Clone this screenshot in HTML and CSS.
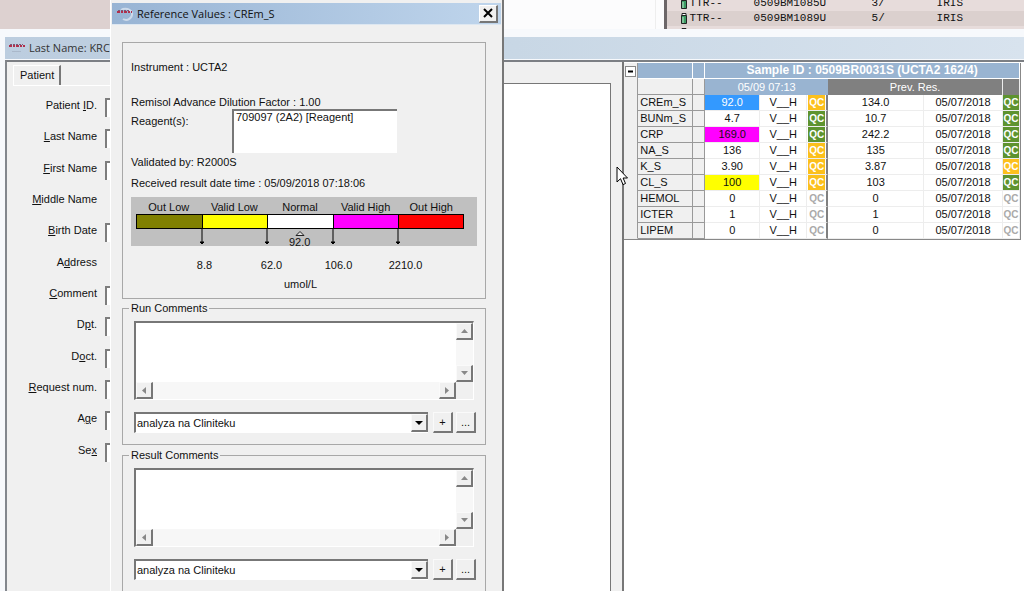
FILE: index.html
```html
<!DOCTYPE html>
<html lang="en">
<head>
<meta charset="utf-8">
<title>Reference Values : CREm_S</title>
<link rel="stylesheet" href="styles.css">
<script src="app.js" defer></script>
</head>
<body>
<div class="desktop">
  <div class="backdrop">
    <div class="backdrop-side"></div>
    <div class="backdrop-page"></div>
    <div class="worklist">
      <table class="worklist-table">
        <colgroup><col class="w-icon"><col class="w-test"><col class="w-sample"><col class="w-pos"><col></colgroup>
        <tbody>
          <tr><td><svg class="tube" viewBox="0 0 6 11"><path d="M.5 2.5h5v8h-5z" fill="#3c9a62" stroke="#222"/><path d="M1 .5h4v2H1z" fill="#fff" stroke="#222"/><path d="M2 4v6" stroke="#bfe8cd"/></svg></td><td>TTR--</td><td>0509BM1085U</td><td>3/</td><td>IRIS</td></tr>
          <tr><td><svg class="tube" viewBox="0 0 6 11"><path d="M.5 2.5h5v8h-5z" fill="#3c9a62" stroke="#222"/><path d="M1 .5h4v2H1z" fill="#fff" stroke="#222"/><path d="M2 4v6" stroke="#bfe8cd"/></svg></td><td>TTR--</td><td>0509BM1089U</td><td>5/</td><td>IRIS</td></tr>
          <tr><td><svg class="tube" viewBox="0 0 6 11"><path d="M.5 2.5h5v8h-5z" fill="#3c9a62" stroke="#222"/><path d="M1 .5h4v2H1z" fill="#fff" stroke="#222"/></svg></td><td></td><td></td><td></td><td></td></tr>
        </tbody>
      </table>
    </div>
  </div>

  <main class="window">
    <header class="titlebar">
      <svg class="logo" viewBox="0 0 18 14"><path d="M1 5h3M5 5h2M8 5h3M12 5h2M15 5h2" stroke="#b0304c" stroke-width="2"/><path d="M2 3.500h13" stroke="#7b5a78" stroke-dasharray="2 1"/><path d="M4 10.500h9" stroke="#aab8ca"/></svg>
      <span>Last Name: KRC</span>
    </header>
    <div class="client">
      <section class="patient-pane">
        <div class="patient">
          <div class="tabs"><button class="tab" type="button">Patient</button></div>
          <form class="fields">
            <label for="pid">Patient <u>I</u>D.</label><input id="pid">
            <label for="last"><u>L</u>ast Name</label><input id="last">
            <label for="first"><u>F</u>irst Name</label><input id="first">
            <label for="middle"><u>M</u>iddle Name</label><input id="middle" class="inset">
            <label for="birth"><u>B</u>irth Date</label><input id="birth">
            <label for="address">A<u>d</u>dress</label><input id="address" class="inset">
            <label for="comment"><u>C</u>omment</label><input id="comment">
            <label for="dpt">D<u>p</u>t.</label><input id="dpt">
            <label for="doct">D<u>o</u>ct.</label><input id="doct">
            <label for="request"><u>R</u>equest num.</label><input id="request">
            <label for="age">A<u>g</u>e</label><input id="age">
            <label for="sex">Se<u>x</u></label><input id="sex">
          </form>
        </div>
        <div class="sheet"></div>
      </section>
      <section class="results">
        <table class="results-table">
          <colgroup><col class="c-gutter"><col class="c-name"><col class="c-flag"><col class="c-value"><col class="c-range"><col class="c-qc"><col class="c-prev"><col class="c-date"><col class="c-qc2"></colgroup>
          <tbody id="results">
            <tr class="sample-row">
              <td class="gutter" rowspan="11"><button class="toggle" type="button" aria-label="Collapse"><svg viewBox="0 0 9 9"><path d="M2 4.500h5" stroke="#000" stroke-width="2"/></svg></button></td>
              <td></td><td></td><th colspan="6">Sample ID : 0509BR0031S (UCTA2 162/4)</th>
            </tr>
            <tr class="date-row">
              <td class="name"></td><td class="name"></td><th class="current" colspan="3">05/09 07:13</th><th class="previous" colspan="2">Prev. Res.</th><th class="previous"></th>
            </tr>
          </tbody>
        </table>
      </section>
    </div>
  </main>

  <svg class="cursor" viewBox="0 0 12 20"><path d="M1 1v15l3.500-3.300L7 18.600l2.500-1.100-2.400-5.500H11.500z" fill="#fff" stroke="#000"/></svg>

  <div class="dialog" role="dialog" aria-labelledby="dialog-title">
    <header class="dialog-title">
      <svg class="logo" viewBox="0 0 18 14"><path d="M5 3a7 6 0 0 1 11 3 6 6 0 0 1-9 6" fill="none" stroke="#cddaea" stroke-width="2"/><path d="M1 5h3M5 5h2M8 5h3M12 5h2M15 5h1" stroke="#b0304c" stroke-width="2"/><path d="M2 3.500h12" stroke="#7b5a78" stroke-dasharray="2 1"/></svg>
      <h1 id="dialog-title">Reference Values : CREm_S</h1>
      <button class="close" type="button" aria-label="Close"><svg viewBox="0 0 10 10"><path d="M1 1l8 8M9 1L1 9" stroke="#000" stroke-width="2"/></svg></button>
    </header>
    <div class="dialog-body">
      <section class="info">
        <p class="instrument">Instrument : UCTA2</p>
        <p>Remisol Advance Dilution Factor : 1.00</p>
        <div class="reagents">
          <label for="reagents">Reagent(s):</label>
          <select id="reagents" size="3"><option>709097 (2A2) [Reagent]</option></select>
        </div>
        <p class="validated">Validated by: R2000S</p>
        <p>Received result date time : 05/09/2018 07:18:06</p>
        <div class="scale">
          <div class="scale-labels"><span>Out Low</span><span>Valid Low</span><span>Normal</span><span>Valid High</span><span>Out High</span></div>
          <div class="scale-bar"><i class="out-low"></i><i class="valid-low"></i><i class="normal"></i><i class="valid-high"></i><i class="out-high"></i></div>
          <svg class="scale-marks" viewBox="0 0 327 17"><g stroke="#000" fill="#000"><path d="M65.500 0v14M130.500 0v14M196.500 0v14M261.500 0v14"/><path d="M63.500 13h4l-2 2zM128.500 13h4l-2 2zM194.500 13h4l-2 2zM259.500 13h4l-2 2z"/></g><path d="M159.500 6.500h8l-4-4z" fill="#ddd" stroke="#222"/></svg>
          <span class="scale-value">92.0</span>
        </div>
        <div class="limits"><span>8.8</span><span>62.0</span><span>106.0</span><span>2210.0</span></div>
        <p class="unit">umol/L</p>
      </section>

      <fieldset class="comments">
        <legend>Run Comments</legend>
        <div class="memo">
          <textarea aria-label="Run Comments"></textarea>
          <div class="vbar"><button type="button" aria-label="Scroll up"><svg viewBox="0 0 8 8"><path d="M1 6h7L4.500 2z" fill="#888"/></svg></button><button type="button" aria-label="Scroll down"><svg viewBox="0 0 8 8"><path d="M1 2h7L4.500 6z" fill="#888"/></svg></button></div>
          <div class="hbar"><button type="button" aria-label="Scroll left"><svg viewBox="0 0 8 8"><path d="M6 1v7L2 4.500z" fill="#888"/></svg></button><button type="button" aria-label="Scroll right"><svg viewBox="0 0 8 8"><path d="M2 1v7l4-3.500z" fill="#888"/></svg></button></div>
        </div>
        <div class="picker">
          <div class="combo"><select aria-label="Run comment"><option>analyza na Cliniteku</option></select><span class="drop"><svg viewBox="0 0 8 8"><path d="M0 2h8L4 6z" fill="#000"/></svg></span></div>
          <button type="button">+</button><button type="button">...</button>
        </div>
      </fieldset>

      <fieldset class="comments">
        <legend>Result Comments</legend>
        <div class="memo">
          <textarea aria-label="Result Comments"></textarea>
          <div class="vbar"><button type="button" aria-label="Scroll up"><svg viewBox="0 0 8 8"><path d="M1 6h7L4.500 2z" fill="#888"/></svg></button><button type="button" aria-label="Scroll down"><svg viewBox="0 0 8 8"><path d="M1 2h7L4.500 6z" fill="#888"/></svg></button></div>
          <div class="hbar"><button type="button" aria-label="Scroll left"><svg viewBox="0 0 8 8"><path d="M6 1v7L2 4.500z" fill="#888"/></svg></button><button type="button" aria-label="Scroll right"><svg viewBox="0 0 8 8"><path d="M2 1v7l4-3.500z" fill="#888"/></svg></button></div>
        </div>
        <div class="picker">
          <div class="combo"><select aria-label="Result comment"><option>analyza na Cliniteku</option></select><span class="drop"><svg viewBox="0 0 8 8"><path d="M0 2h8L4 6z" fill="#000"/></svg></span></div>
          <button type="button">+</button><button type="button">...</button>
        </div>
      </fieldset>
    </div>
  </div>
</div>
</body>
</html>
```

FILE: styles.css
```css
* { box-sizing: border-box; }

body {
  margin: 0;
  font: 11px/14px "Liberation Sans", Arial, sans-serif;
  color: #111;
}

p, h1 { margin: 0; font-size: inherit; font-weight: normal; }
svg { display: block; flex: none; }

button, input, select, textarea {
  font: inherit;
  color: inherit;
  margin: 0;
  padding: 0;
  border: 0;
  border-radius: 0;
  outline: 0;
}

.desktop {
  position: relative;
  display: flex;
  flex-direction: column;
  height: 100vh;
  overflow: hidden;
}

/* Worklist window behind */
.backdrop { display: flex; flex: none; height: 29px; overflow: hidden; background: #fcfcfd; }
.backdrop-side { width: 111px; background: #ddd1d0; }
.backdrop-page { flex: 546 1 0; border-right: 1px solid #eee; }
.worklist { flex: 359 1 0; margin-left: 8px; border-left: 3px solid #6c6668; }
.worklist-table {
  width: 100%;
  margin-top: -4px;
  border-collapse: collapse;
  table-layout: fixed;
  font-family: "Liberation Mono", monospace;
  white-space: nowrap;
}
.worklist-table td { height: 15px; padding: 0; line-height: 15px; background: #e7dcdb; }
.worklist-table tr:nth-child(2) td { background: #dbd0ce; }
.w-icon { width: 23px; }
.w-test { width: 64px; }
.w-sample { width: 118px; }
.w-pos { width: 65px; }
.tube { width: 6px; height: 11px; margin-left: 14px; }

/* Patient window */
.window { display: flex; flex-direction: column; flex: 1; min-height: 0; padding: 8px 0 0 5px; background: #f7f9fc; }
.titlebar {
  display: flex;
  align-items: center;
  flex: none;
  gap: 3px;
  height: 22px;
  padding-left: 3px;
  background: linear-gradient(90deg, #bccddf, #c8d7e5 50%, #d8e3ee);
  font: 11px/18px "Open Sans", "Noto Sans", sans-serif;
  color: #333;
}
.logo { width: 18px; height: 14px; }
.client { display: flex; flex: 1; min-height: 0; border-top: 2px solid #7c7f84; border-left: 2px solid #83878d; margin-top: 1px; background: #f0f0f0; }

.patient-pane { display: flex; flex: 606 1 0; padding-right: 11px; }
.patient { flex: 490 1 0; padding: 3px 0 0 5px; }
.tabs { display: flex; border-bottom: 1px solid #fff; border-left: 1px solid #fff; }
.tab { height: 20px; padding: 0 5px 2px 6px; background: #f0f0f0; border-top: 1px solid #fff; border-right: 2px solid #777; }
.fields {
  display: grid;
  grid-template-columns: 84px 1fr;
  grid-template-rows: repeat(12, 1fr);
  column-gap: 8px;
  align-items: center;
  height: 376px;
  margin-top: 6px;
}
.patient { border-left: 1px solid #f0f0f0; }
.fields label { text-align: right; padding-bottom: 5px; white-space: nowrap; justify-self: end; }
.fields input { width: 100%; height: 19px; background: #fff; border-left: 2px solid #7d7d7d; border-top: 2px solid #7d7d7d; }
.fields .inset { justify-self: end; width: 80%; }
.sheet { flex: 116 1 0; margin-top: 21px; background: #fff; border-top: 1px solid #777; border-right: 1px solid #777; }

.results { flex: 398 1 0; background: #fff; border-left: 2px solid #777; padding: 1px 3px 0 0; }
.results-table {
  width: 100%;
  border-collapse: separate;
  border-spacing: 0;
  table-layout: fixed;
  border-right: 1px solid #888;
  border-bottom: 1px solid #888;
}
.results-table td, .results-table th {
  height: 16px;
  padding: 0;
  line-height: 15px;
  font-weight: normal;
  text-align: center;
  white-space: nowrap;
  border-right: 1px solid #ededed;
  border-bottom: 1px solid #ededed;
}
.c-gutter { width: 14px; }
.c-name { width: 55px; }
.c-flag { width: 12px; }
.c-value { width: 55px; }
.c-range { width: 47px; }
.c-qc { width: 21px; }
.c-date { width: 79px; }
.c-qc2 { width: 17px; }
.results-table .gutter { vertical-align: top; background: #f0f0f0; border-right: 1px solid #999; padding: 4px 2px; }
.toggle { display: block; width: 9px; height: 9px; background: #fff; outline: 1px solid #888; }
.results-table .sample-row td:not(.gutter) { background: #99b4d1; border-color: #fff; }
.results-table .sample-row th { font-size: 12px; font-weight: bold; background: #99b4d1; color: #fff; border-color: #fff; }
.results-table .current { background: #99b4d1; color: #fff; border: 0; }
.results-table .previous { background: #808080; color: #fff; border-bottom: 0; }
.results-table .name { text-align: left; padding-left: 2px; background: #f0f0f0; border-color: #999; }
.results-table .value-selected { background: #3399ff; color: #fff; }
.results-table .value-high { background: #ff00ff; }
.results-table .value-low { background: #ffff00; }
.results-table .split { border-right: 2px solid #808080; }
.qc { display: block; height: 15px; font: bold 10px/15px "Liberation Sans Narrow", "Liberation Sans", sans-serif; color: #fff; }
.split .qc { margin: 0 1px; }
.qc-warn { background: #fcc01c; }
.qc-ok { background: #5e932f; }
.qc-none { color: #aaa; }

.cursor { position: absolute; left: 616px; top: 166px; width: 12px; height: 20px; }

/* Reference values dialog */
.dialog {
  position: absolute;
  left: 110px;
  top: 0;
  bottom: 0;
  width: 394px;
  padding: 3px 1px 0 1px;
  overflow: hidden;
  background: #f0f0f0;
  border-left: 1px solid #fff;
  border-right: 2px solid #777;
}
.dialog-title {
  display: flex;
  align-items: center;
  height: 22px;
  padding: 0 3px 0 4px;
  gap: 3px;
  background: linear-gradient(90deg, #98b4d4, #bfd5ec);
  font: 11px/18px "Open Sans", "Noto Sans", sans-serif;
  border-bottom: 1px solid #dde7f1;
}
.close {
  display: grid;
  place-items: center;
  width: 19px;
  height: 18px;
  margin-left: auto;
  background: #f0f0f0;
  border: 1px solid #fff;
  border-right: 2px solid #777;
  border-bottom: 2px solid #777;
}
.close svg { width: 10px; height: 10px; }
.dialog-body { padding: 17px 15px 0 10px; }

.info { height: 257px; padding: 17px 8px 0; border: 1px solid #a8a8a8; }
.instrument { margin-bottom: 21px; }
.reagents { display: flex; gap: 31px; height: 44px; }
.reagents label { width: 70px; padding-top: 5px; }
.reagents select {
  width: 165px;
  padding-left: 2px;
  background: #fff;
  overflow: hidden;
  border-left: 2px solid #777;
  border-top: 2px solid #777;
}
.reagents option { padding: 0; min-height: 14px; line-height: 14px; }
.validated { margin: 2px 0 7px; }
.scale { position: relative; height: 49px; margin-top: 7px; padding: 3px 13px 0 5px; background: #c0c0c0; }
.scale-labels { display: grid; grid-template-columns: repeat(5, 1fr); text-align: center; }
.scale-bar { display: grid; grid-template-columns: repeat(5, 1fr); height: 15px; border: 1px solid #000; }
.scale-bar i + i { border-left: 1px solid #000; }
.out-low { background: #808000; }
.valid-low { background: #ffff00; }
.normal { background: #fff; }
.valid-high { background: #ff00ff; }
.out-high { background: #ff0000; }
.scale-marks { width: 100%; height: 17px; }
.scale-value { position: absolute; left: 158px; bottom: -3px; }
.limits { display: grid; grid-template-columns: repeat(4, 67px); margin: 12px 0 5px 40px; text-align: center; }
.unit { text-align: center; padding-right: 7px; }

.comments { margin: 2px 0 0; padding: 6px 9px 11px 11px; border: 1px solid #a8a8a8; min-width: 0; }
.comments + .comments { margin-top: 3px; }
.comments legend { height: 14px; padding: 0 2px; margin-left: -5px; }
.memo {
  display: grid;
  grid-template-columns: 1fr 17px;
  grid-template-rows: 1fr 17px;
  height: 79px;
  margin-right: 2px;
  border: 1px solid #fff;
  border-left: 2px solid #777;
  border-top: 2px solid #777;
}
.memo textarea { width: 100%; height: 100%; resize: none; background: #fff; }
.vbar, .hbar { display: flex; justify-content: space-between; background: #f7f7f7; }
.vbar { flex-direction: column; }
.memo button, .picker button, .drop {
  display: grid;
  place-items: center;
  width: 17px;
  height: 17px;
  background: #f0f0f0;
  border: 1px solid #fafafa;
  border-right: 2px solid #777;
  border-bottom: 2px solid #777;
}
.memo svg, .drop svg { width: 8px; height: 8px; }
.picker { display: flex; gap: 3px; height: 21px; margin-top: 12px; }
.combo { position: relative; flex: 1; margin-right: 2px; border-left: 2px solid #777; border-top: 2px solid #777; border-bottom: 1px solid #fff; background: #fff; }
.combo select { width: 100%; height: 100%; padding-left: 1px; appearance: none; background: #fff; }
.drop { position: absolute; right: 0; top: 0; height: 18px; pointer-events: none; }
.picker button { width: 20px; height: 21px; }
```

FILE: app.js
```js
const rows = [
  ["CREm_S", "92.0", "value-selected", "warn", "134.0", "ok"],
  ["BUNm_S", "4.7", "", "ok", "10.7", "ok"],
  ["CRP", "169.0", "value-high", "ok", "242.2", "ok"],
  ["NA_S", "136", "", "warn", "135", "ok"],
  ["K_S", "3.90", "", "warn", "3.87", "warn"],
  ["CL_S", "100", "value-low", "warn", "103", "ok"],
  ["HEMOL", "0", "", "none", "0", "none"],
  ["ICTER", "1", "", "none", "1", "none"],
  ["LIPEM", "0", "", "none", "0", "none"]
];

document.getElementById("results").insertAdjacentHTML("beforeend", rows.map(([name, value, state, qc, prev, prevQc]) => `
  <tr>
    <th class="name" scope="row">${name}</th><td class="name"></td>
    <td class="${state}">${value}</td><td>V__H</td>
    <td class="split"><span class="qc qc-${qc}">QC</span></td>
    <td>${prev}</td><td>05/07/2018</td>
    <td><span class="qc qc-${prevQc}">QC</span></td>
  </tr>`).join(""));
```
